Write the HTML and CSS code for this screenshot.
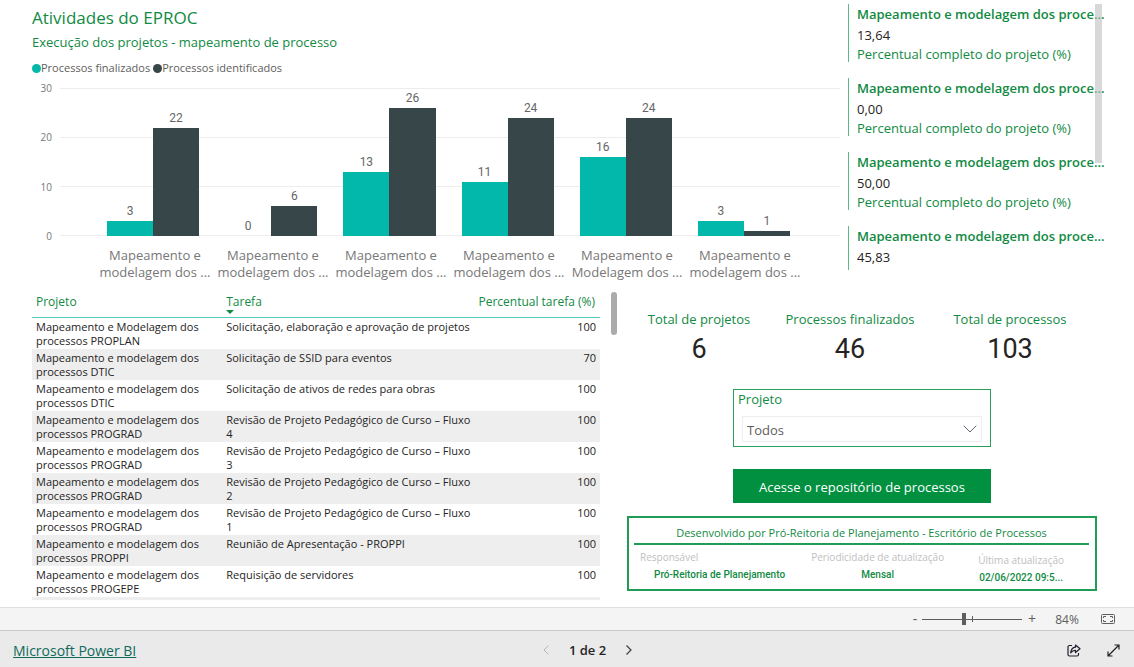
FILE: index.html
```html
<!DOCTYPE html>
<html lang="pt-BR">
<head>
<meta charset="utf-8">
<meta name="viewport" content="width=device-width, initial-scale=1">
<title>Atividades do EPROC</title>
<link rel="stylesheet" href="styles.css">
</head>
<body>
<main class="report">
  <div class="top-row">
    <section class="chart-panel">
      <h1 class="title">Atividades do EPROC</h1>
      <h2 class="subtitle">Execução dos projetos - mapeamento de processo</h2>
      <ul class="legend">
        <li><span class="dot done"></span>Processos finalizados</li>
        <li><span class="dot found"></span>Processos identificados</li>
      </ul>
      <div class="chart">
        <div class="axis"><span>30</span><span>20</span><span>10</span><span>0</span></div>
        <div class="plot">
          <div class="group">
            <div class="col"><span>3</span><div class="bar done" style="height:10%"></div></div>
            <div class="col"><span>22</span><div class="bar found" style="height:73.3%"></div></div>
          </div>
          <div class="group">
            <div class="col"><span>0</span><div class="bar done" style="height:0%"></div></div>
            <div class="col"><span>6</span><div class="bar found" style="height:20%"></div></div>
          </div>
          <div class="group">
            <div class="col"><span>13</span><div class="bar done" style="height:43.3%"></div></div>
            <div class="col"><span>26</span><div class="bar found" style="height:86.7%"></div></div>
          </div>
          <div class="group">
            <div class="col"><span>11</span><div class="bar done" style="height:36.7%"></div></div>
            <div class="col"><span>24</span><div class="bar found" style="height:80%"></div></div>
          </div>
          <div class="group">
            <div class="col"><span>16</span><div class="bar done" style="height:53.3%"></div></div>
            <div class="col"><span>24</span><div class="bar found" style="height:80%"></div></div>
          </div>
          <div class="group">
            <div class="col"><span>3</span><div class="bar done" style="height:10%"></div></div>
            <div class="col"><span>1</span><div class="bar found" style="height:3.3%"></div></div>
          </div>
        </div>
        <div class="categories">
          <span>Mapeamento e<br>modelagem dos ...</span>
          <span>Mapeamento e<br>modelagem dos ...</span>
          <span>Mapeamento e<br>modelagem dos ...</span>
          <span>Mapeamento e<br>modelagem dos ...</span>
          <span>Mapeamento e<br>Modelagem dos ...</span>
          <span>Mapeamento e<br>modelagem dos ...</span>
        </div>
      </div>
    </section>
    <section class="cards">
      <article class="card"><h3>Mapeamento e modelagem dos proce...</h3><p class="value">13,64</p><p class="label">Percentual completo do projeto (%)</p></article>
      <article class="card"><h3>Mapeamento e modelagem dos proce...</h3><p class="value">0,00</p><p class="label">Percentual completo do projeto (%)</p></article>
      <article class="card"><h3>Mapeamento e modelagem dos proce...</h3><p class="value">50,00</p><p class="label">Percentual completo do projeto (%)</p></article>
      <article class="card"><h3>Mapeamento e modelagem dos proce...</h3><p class="value">45,83</p></article>
      <div class="cards-scroll"></div>
    </section>
  </div>

  <div class="bottom-row">
    <section class="table-panel">
      <table class="tasks">
        <colgroup><col class="c-project"><col class="c-task"><col class="c-percent"></colgroup>
        <thead>
          <tr><th scope="col">Projeto</th><th scope="col" class="sorted">Tarefa</th><th scope="col" class="num">Percentual tarefa (%)</th></tr>
        </thead>
        <tbody>
          <tr><td>Mapeamento e Modelagem dos<br>processos PROPLAN</td><td>Solicitação, elaboração e aprovação de projetos</td><td class="num">100</td></tr>
          <tr><td>Mapeamento e modelagem dos<br>processos DTIC</td><td>Solicitação de SSID para eventos</td><td class="num">70</td></tr>
          <tr><td>Mapeamento e modelagem dos<br>processos DTIC</td><td>Solicitação de ativos de redes para obras</td><td class="num">100</td></tr>
          <tr><td>Mapeamento e modelagem dos<br>processos PROGRAD</td><td>Revisão de Projeto Pedagógico de Curso – Fluxo<br>4</td><td class="num">100</td></tr>
          <tr><td>Mapeamento e modelagem dos<br>processos PROGRAD</td><td>Revisão de Projeto Pedagógico de Curso – Fluxo<br>3</td><td class="num">100</td></tr>
          <tr><td>Mapeamento e modelagem dos<br>processos PROGRAD</td><td>Revisão de Projeto Pedagógico de Curso – Fluxo<br>2</td><td class="num">100</td></tr>
          <tr><td>Mapeamento e modelagem dos<br>processos PROGRAD</td><td>Revisão de Projeto Pedagógico de Curso – Fluxo<br>1</td><td class="num">100</td></tr>
          <tr><td>Mapeamento e modelagem dos<br>processos PROPPI</td><td>Reunião de Apresentação - PROPPI</td><td class="num">100</td></tr>
          <tr><td>Mapeamento e modelagem dos<br>processos PROGEPE</td><td>Requisição de servidores</td><td class="num">100</td></tr>
        </tbody>
      </table>
      <div class="table-scroll"></div>
    </section>

    <section class="side">
      <dl class="kpis">
        <div><dt>Total de projetos</dt><dd>6</dd></div>
        <div><dt>Processos finalizados</dt><dd>46</dd></div>
        <div><dt>Total de processos</dt><dd>103</dd></div>
      </dl>
      <div class="slicer">
        <label for="project">Projeto</label>
        <div class="select-wrap">
          <select id="project"><option>Todos</option></select>
          <svg class="chevron" viewBox="0 0 14 8" width="14" height="8" aria-hidden="true"><path d="M.7.7 7 7 13.3.7" fill="none" stroke="#666079" stroke-width="1"/></svg>
        </div>
      </div>
      <button type="button" class="repo">Acesse o repositório de processos</button>
      <section class="info">
        <h2>Desenvolvido por Pró-Reitoria de Planejamento - Escritório de Processos</h2>
        <dl>
          <div class="owner"><dt>Responsável</dt><dd>Pró-Reitoria de Planejamento</dd></div>
          <div class="period"><dt>Periodicidade de atualização</dt><dd>Mensal</dd></div>
          <div class="updated"><dt>Última atualização</dt><dd>02/06/2022 09:5...</dd></div>
        </dl>
      </section>
    </section>
  </div>
</main>

<div class="zoom-bar">
  <button type="button" class="step minus" aria-label="Diminuir zoom">-</button>
  <input type="range" min="0" max="100" value="42" aria-label="Zoom">
  <button type="button" class="step plus" aria-label="Aumentar zoom">+</button>
  <span class="zoom-value">84%</span>
  <button type="button" class="fit" aria-label="Ajustar à página">
    <svg viewBox="0 0 14 10" width="14" height="10" fill="none" stroke="#605e5c"><rect x=".5" y=".5" width="13" height="9" rx="1"/><path d="M2.500 4V2.500H5M2.500 6v1.500H5M9 2.500h2.500V4M11.500 6v1.500H9"/></svg>
  </button>
</div>
<footer class="footer">
  <a class="brand" href="#">Microsoft Power BI</a>
  <nav class="pager">
    <button type="button" disabled aria-label="Página anterior"><svg viewBox="0 0 6 10" width="6" height="10"><path d="M5.500.5 1 5l4.500 4.500" fill="none" stroke="#b8b6b4"/></svg></button>
    <span>1 de 2</span>
    <button type="button" aria-label="Próxima página"><svg viewBox="0 0 6 10" width="6" height="10"><path d="M.5.500 5 5 .5 9.500" fill="none" stroke="#403e3c" stroke-width="1.200"/></svg></button>
  </nav>
  <div class="actions">
    <button type="button" aria-label="Compartilhar"><svg viewBox="0 0 14 13" width="14" height="13" fill="none" stroke="#201f2e" stroke-width="1.200" stroke-linejoin="round"><path d="M5 1.500H2.500A1.500 1.500 0 0 0 1 3v7.500A1.500 1.500 0 0 0 2.500 12h7.500a1.500 1.500 0 0 0 1.500-1.500V9"/><path d="M8.500 1 13 4.800 8.500 8.500V6.400C6.500 6.300 5 7 3.700 8.800 4 5.500 5.800 3.500 8.500 3.200z"/></svg></button>
    <button type="button" aria-label="Tela inteira"><svg viewBox="0 0 13 13" width="13" height="13" fill="none" stroke="#201f1e" stroke-width="1.200"><path d="M1 12 12 1M7.500 1H12v4.500M1 7.500V12h4.500"/></svg></button>
  </div>
</footer>
</body>
</html>
```
FILE: styles.css
```css
* { box-sizing: border-box; }

body {
  margin: 0;
  min-height: 100vh;
  display: flex;
  flex-direction: column;
  background: #fff;
  color: #252423;
  font-family: "Open Sans", "Noto Sans", sans-serif;
  font-size: 13px;
}

h1, h2, h3, p, ul, dl, dd { margin: 0; padding: 0; font-weight: 400; }
button, select { font: inherit; color: inherit; border: 0; padding: 0; background: none; }

.report { flex: 1; color: #118a43; }

/* Top row: bar chart and project cards */
.top-row {
  display: flex;
  gap: 8px;
  padding: 4px 32px 0 32px;
}
.chart-panel { flex: 1; }
.title { font-size: 17px; line-height: 28px; }
.subtitle { font-size: 13px; line-height: 20px; }

.legend {
  display: flex;
  gap: 3px;
  margin-top: 6px;
  list-style: none;
  font-size: 11px;
  line-height: 20px;
  color: #605e5c;
}
.legend li { display: flex; align-items: center; }
.dot { width: 9px; height: 9px; border-radius: 50%; }
.done { background: #01b8aa; }
.found { background: #374649; }

.chart {
  display: grid;
  grid-template-columns: 20px 1fr;
  column-gap: 8px;
  margin-top: 10px;
}
.axis {
  display: flex;
  flex-direction: column;
  justify-content: space-between;
  margin: -8px 0;
  font-size: 10px;
  line-height: 16px;
  text-align: right;
  color: #777;
}
.plot {
  display: flex;
  height: 148px;
  padding: 0 37px 0 34px;
  background:
    linear-gradient(#ededed, #ededed) 0 0 / 100% 1px no-repeat,
    linear-gradient(#ededed, #ededed) 0 33.3% / 100% 1px no-repeat,
    linear-gradient(#ededed, #ededed) 0 66.7% / 100% 1px no-repeat,
    linear-gradient(#ededed, #ededed) 0 100% / 100% 1px no-repeat;
}
.group { flex: 1; display: flex; justify-content: center; }
.col {
  width: 39%;
  display: flex;
  flex-direction: column;
  justify-content: flex-end;
  text-align: center;
  font-family: Roboto, sans-serif;
  font-size: 12px;
  line-height: 20px;
  color: #666;
}
.bar { flex: none; }
.categories {
  grid-column: 2;
  display: flex;
  padding: 0 36px;
  margin-top: 11px;
  line-height: 17px;
  text-align: center;
  white-space: nowrap;
  color: #777;
}
.categories span { flex: 1 1 0; min-width: 0; }

.cards {
  position: relative;
  width: 254px;
  display: flex;
  flex-direction: column;
  gap: 16px;
}
.card { padding-left: 8px; border-left: 1px solid #5fb887; white-space: nowrap; }
.card:nth-child(4) { padding-bottom: 1px; }
.card h3 { font-size: 13px; line-height: 20px; font-weight: 600; }
.card .value { line-height: 23px; color: #252423; }
.card .label { line-height: 15px; }
.cards-scroll {
  position: absolute;
  top: 0;
  right: 0;
  width: 7px;
  height: 159px;
  background: rgba(190, 190, 190, .6);
}

/* Bottom row: task table and summary column */
.bottom-row {
  display: flex;
  gap: 10px;
  padding: 9px 37px 5px 32px;
}
.table-panel { flex: 1; display: flex; gap: 11px; align-items: flex-start; }
.tasks {
  flex: 1;
  table-layout: fixed;
  border-collapse: collapse;
  font-size: 11px;
  line-height: 14px;
  border-bottom: 3px solid #eee;
  color: #252423;
}
.c-project { width: 34%; }
.c-task { width: 44%; }
.c-percent { width: 22%; }
.tasks th {
  height: 27px;
  padding: 4px 5px 0 4px;
  vertical-align: top;
  text-align: left;
  font-size: 12px;
  line-height: 16px;
  font-weight: 400;
  color: #118a43;
  border-bottom: 1px solid #4fc9be;
  white-space: nowrap;
}
.tasks td { height: 31px; padding: 2px 4px 1px; vertical-align: top; white-space: nowrap; }
.tasks tbody tr:nth-child(even) { background: #eee; }
.tasks .num { text-align: right; }
.sorted::after {
  content: "";
  display: block;
  width: 0;
  border: 4px solid transparent;
  border-top-color: #118a43;
  border-bottom: 0;
}
.table-scroll { width: 6px; height: 43px; margin-top: 2px; border-radius: 3px; background: #ababab; }

.side { width: 470px; display: flex; flex-direction: column; align-items: center; }
.kpis {
  align-self: stretch;
  display: grid;
  grid-template-columns: 144fr 158fr 162fr;
  padding: 19px 6px 0 0;
  text-align: center;
}
.kpis dt { line-height: 20px; }
.kpis dd { font: 27px/40px Roboto, sans-serif; color: #252423; }

.slicer {
  width: 258px;
  margin: 20px 0 22px 0;
  padding: 0 8px 4px 4px;
  border: 1px solid #2ba05d;
}
.slicer label { display: block; line-height: 18px; }
.select-wrap { position: relative; margin: 8px 0 0 4px; }
.slicer select {
  display: block;
  width: 100%;
  height: 26px;
  padding: 2px 4px 0;
  border: 1px solid #eee;
  appearance: none;
  color: #605e5c;
}
.chevron { position: absolute; right: 5px; top: 9px; pointer-events: none; }
.repo { width: 258px; height: 34px; padding-top: 2px; background: #01903f; color: #fff; }

.info {
  align-self: stretch;
  margin-top: 13px;
  padding: 6px 6px 6px 5px;
  height: 75px;
  border: 2px solid #1f9c55;
}
.info h2 {
  font-size: 11px;
  line-height: 18px;
  padding-bottom: 1px;
  text-align: center;
  border-bottom: 2px solid #1f9c55;
}
.info dl { display: flex; justify-content: space-between; padding: 2px 25px 0 6px; }
.info dt { font-size: 10px; line-height: 20px; color: #c0c0c0; }
.info dd { font: 500 10px/16px Roboto, sans-serif; }
.owner dd { padding-left: 14px; }
.period { margin-right: 8px; text-align: center; }
.updated { padding-top: 3px; text-align: center; }

/* Viewer chrome */
.zoom-bar {
  display: flex;
  align-items: center;
  justify-content: flex-end;
  height: 23px;
  padding-right: 19px;
  background: #f4f4f4;
  border-top: 1px solid #dedede;
  color: #605e5c;
}
.step { width: 14px; line-height: 20px; font-size: 14px; }
.zoom-bar input {
  width: 100px;
  height: 12px;
  margin: 0;
  appearance: none;
  background:
    linear-gradient(#605e5c, #605e5c) 50% 50% / 1px 6px no-repeat,
    linear-gradient(#605e5c, #605e5c) 0 50% / 100% 1px no-repeat;
}
.zoom-bar input::-webkit-slider-thumb { appearance: none; width: 4px; height: 12px; background: #605e5c; }
.plus { margin-left: 3px; }
.zoom-value { width: 40px; margin: 0 14px 0 8px; text-align: center; font-size: 12px; }
.fit, .actions button, .pager button { display: flex; }

.footer {
  display: grid;
  grid-template-columns: 1fr auto 1fr;
  align-items: center;
  height: 37px;
  padding: 2px 14px 0 13px;
  background: #eaeaea;
  border-top: 1px solid #c8c8c8;
}
.brand { justify-self: start; font-size: 14px; font-weight: 500; color: #0e6b5c; }
.pager { display: flex; align-items: center; gap: 20px; padding-left: 42px; font-weight: 600; }
.actions { display: flex; align-items: center; justify-content: flex-end; gap: 26px; }
```
